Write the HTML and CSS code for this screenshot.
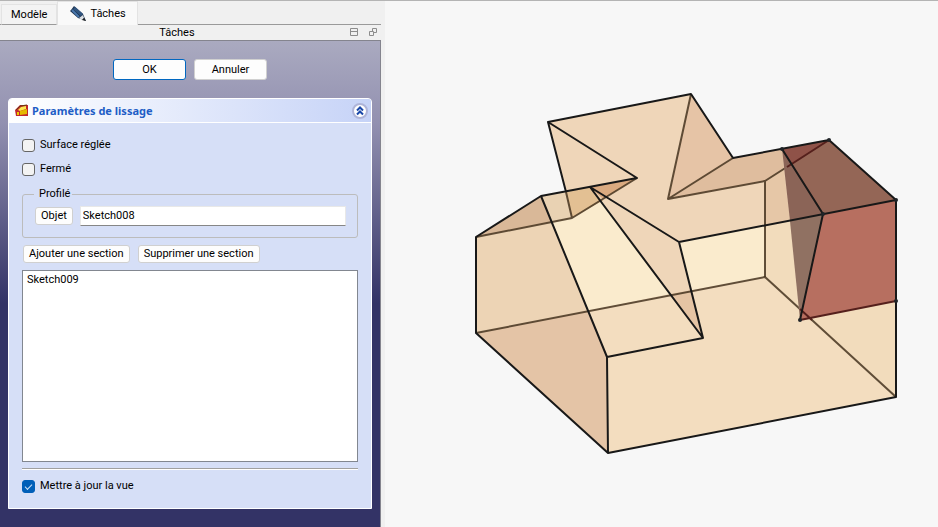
FILE: index.html
```html
<!DOCTYPE html>
<html lang="fr">
  <head>
    <meta charset="utf-8">
    <meta name="viewport" content="width=device-width,initial-scale=1.0">
    <title>Tâches</title>
    <link rel="stylesheet" href="styles.css">
  </head>
  <body>
    <aside class="dock">
      <nav class="tabs">
        <button type="button" class="tab">Modèle</button>
        <button type="button" class="tab active">
          <svg width="16" height="16" viewBox="0 0 16 16">
            <path d="M1 4 L4 0 L13 8 L16 15 L8 12 L0 5 Z" fill="#1c3350"/>
            <path d="M2 4 L9 11" stroke="#4a78ad" stroke-width="2"/>
            <path d="M4 2 L12 9" stroke="#31557f" stroke-width="3"/>
            <path d="M9 12 L13 9 L14 12 L12 14 Z" fill="#dce0e4"/>
            <path d="M14 12 L16 15 L12 14 Z" fill="#222"/>
          </svg>
          Tâches
        </button>
      </nav>
      <header class="titlebar">
        <h1>Tâches</h1>
        <button type="button" class="tool" aria-label="Réduire">
          <svg width="9" height="9" viewBox="0 0 9 9"><path d="M.5 .5h7v7h-7z M0 3.500h8" fill="none" stroke="#8c8c8c"/></svg>
        </button>
        <button type="button" class="tool" aria-label="Détacher">
          <svg width="9" height="9" viewBox="0 0 9 9"><path d="M.5 3.500h4v4h-4z M3.500 3V.5h4v4H5" fill="none" stroke="#8c8c8c"/></svg>
        </button>
      </header>
      <form class="tasks">
        <div class="actions">
          <button type="button" class="btn wide default">OK</button>
          <button type="button" class="btn wide">Annuler</button>
        </div>
        <section class="box">
          <header class="box-head">
            <svg width="14" height="14" viewBox="0 0 14 14">
              <path d="M0 6 L5 1 L13 1 V12 L1 12 Z" fill="#c1272d"/>
              <path d="M3 6 L6 3 L11 2 V5 L5 7 Z" fill="#fce94f"/>
              <path d="M5 7 L12 5 V10 L5 11 Z" fill="#e5b900"/>
              <path d="M2 8 H4 V11 H2 Z" fill="#edc900"/>
              <path d="M1 6 L5 2 L12 1" fill="none" stroke="#6b3a10"/>
            </svg>
            <h2>Paramètres de lissage</h2>
            <button type="button" class="fold" aria-label="Replier">
              <svg width="16" height="16" viewBox="0 0 16 16">
                <circle cx="8" cy="8" r="7" fill="#fff" stroke="#aeb4d8" stroke-width="2"/>
                <path d="M5 7.500 L8 4.500 L11 7.500 M5 11.500 L8 8.500 L11 11.500" fill="none" stroke="#1a48a8" stroke-width="2"/>
              </svg>
            </button>
          </header>
          <div class="box-body">
            <label class="check"><input type="checkbox">Surface réglée</label>
            <label class="check"><input type="checkbox">Fermé</label>
            <fieldset class="profile">
              <legend>Profilé</legend>
              <button type="button" class="btn">Objet</button>
              <input type="text" value="Sketch008" aria-label="Profilé">
            </fieldset>
            <div class="sections">
              <button type="button" class="btn">Ajouter une section</button>
              <button type="button" class="btn">Supprimer une section</button>
            </div>
            <select class="list" size="8" aria-label="Sections">
              <option>Sketch009</option>
            </select>
            <hr>
            <label class="check"><input type="checkbox" checked>Mettre à jour la vue</label>
          </div>
        </section>
      </form>
    </aside>
    <main class="view">
      <svg viewBox="385 1 553 526" role="img" aria-label="Vue 3D">
        <!-- faces -->
        <path fill="#efd6b9" d="M548 122 691 94 733 158 829 140 896 200 896 397 608 453 476 333 476 237 541 196 566 192Z"/>
        <path fill="#edd4b5" d="M476 237 552 222 588 311 476 333Z"/>
        <path fill="#e4c4a6" d="M476 333 588 311 607 357 608 453Z"/>
        <path fill="#d9b898" d="M476 237 541 196 552 222Z"/>
        <path fill="#e9d2b3" d="M541 196 566 192 572 218 552 222Z"/>
        <path fill="#e3c093" d="M566 192 590 187 603 201 572 218Z"/>
        <path fill="#daaa80" d="M590 187 637 178 603 199Z"/>
        <path fill="#faebcd" d="M552 222 572 218 602 201 670 294 588 311Z"/>
        <path fill="#f3ddbf" d="M588 311 670 294 703 338 692 290 765 277 896 301 896 397 608 453 607 357Z"/>
        <path fill="#e5c4a4" d="M670 294 692 290 703 338Z"/>
        <path fill="#faebcd" d="M679 242 765 226 765 277 692 290Z"/>
        <path fill="#e6c4a6" d="M691 94 733 158 668 199Z"/>
        <path fill="#dfbd9e" d="M733 158 782 149 784 170 765 181 668 199Z"/>
        <path fill="#e6c7a7" d="M765 181 784 170 790 221 765 226Z"/>
        <path fill="#f2dcbc" d="M765 226 790 221 800 320 896 301 896 397 765 277Z"/>
        <!-- hidden edges -->
        <g class="hidden-edge">
          <path d="M476 237 572 218 637 178 M566 192 572 218 M691 94 668 199 733 158 M668 199 765 181 829 140 M765 181V277"/>
          <path d="M476 333 765 277 896 397"/>
        </g>
        <!-- loft preview -->
        <path fill="#8b6457" d="M782 149 823 214 790 221Z"/>
        <path fill="#946656" d="M782 149 829 140 896 200 823 214Z"/>
        <path fill="#8f5248" d="M782 149 829 140 791 165Z"/>
        <path fill="#907162" d="M790 221 823 214 800 320Z"/>
        <path fill="#b76f60" d="M823 214 896 200 896 301 800 320Z"/>
        <path class="red-edge" d="M787 167 829 140 M800 309 812 320 M800 320 896 301"/>
        <!-- visible edges -->
        <g class="edge">
          <path d="M566 192 548 122 691 94 733 158 829 140 896 200V397L608 453 476 333V237L541 196 637 178 548 122"/>
          <path d="M541 196 607 357 608 453 M607 357 703 338 590 187 679 242 703 338 M679 242 896 200"/>
          <path d="M782 149 823 214 800 320"/>
        </g>
        <g class="vertex">
          <circle cx="782" cy="149" r="2"/>
          <circle cx="829" cy="140" r="2"/>
          <circle cx="896" cy="200" r="2"/>
          <circle cx="896" cy="301" r="2"/>
          <circle cx="800" cy="320" r="2"/>
          <circle cx="823" cy="214" r="2"/>
        </g>
      </svg>
    </main>
  </body>
</html>
```
FILE: styles.css
```css
* {
    box-sizing: border-box;
}
html, body, h1, h2, form, fieldset, hr {
    margin: 0;
    padding: 0;
}
body {
    display: flex;
    min-height: 100vh;
    border-top: 1px solid #b4b4b4;
    background: #f7f7f7;
    color: #000;
    font: 11px/16px Roboto, "Open Sans", sans-serif;
}
button, input, select {
    font: inherit;
    color: inherit;
}
svg {
    display: block;
}

/* left dock */
.dock {
    display: flex;
    flex-direction: column;
    flex: none;
    width: 385px;
    padding-right: 4px;
    background: #f0f0f0;
}
.tabs {
    display: flex;
    align-items: flex-end;
    height: 24px;
    padding-left: 1px;
    box-shadow: inset 0 -1px #9a9a9a;
}
.tab {
    display: flex;
    align-items: center;
    gap: 4px;
    height: 21px;
    padding: 0 9px;
    border: 1px solid #e3e3e3;
    border-bottom-color: #9a9a9a;
    background: #f3f3f3;
}
.tab.active {
    height: 24px;
    padding: 0 11px 0 12px;
    border-bottom: 0;
    background: #f9f9f9;
}
.titlebar {
    display: flex;
    align-items: center;
    gap: 10px;
    height: 16px;
    padding-right: 3px;
    border-bottom: 1px solid #84848e;
}
.titlebar h1 {
    flex: 1;
    padding-left: 14px;
    font-size: 11px;
    font-weight: normal;
    text-align: center;
}
.tool, .fold {
    padding: 0;
    border: 0;
    background: none;
}
.tasks {
    flex: 1;
    padding: 18px 8px;
    border-right: 1px solid #84848e;
    background: linear-gradient(#aaaac0, #9290b0 17%, #333366 54%);
}
.actions {
    display: flex;
    justify-content: center;
    gap: 8px;
    margin-bottom: 18px;
}
.btn {
    height: 18px;
    padding: 0 5px;
    border: 1px solid #d0d0d0;
    border-radius: 3px;
    background: #fdfdfd;
    line-height: 16px;
}
.btn.wide {
    width: 73px;
    height: 21px;
}
.btn.default {
    border-color: #0067c0;
}

/* task box */
.box {
    border: 1px solid #fff;
    border-radius: 4px 4px 0 0;
    background: #d6dff7;
}
.box-head {
    display: flex;
    align-items: center;
    gap: 3px;
    height: 24px;
    padding: 0 3px 0 6px;
    border-bottom: 1px solid #fff;
    border-radius: 3px 3px 0 0;
    background: linear-gradient(to right, #fff, #c6d3f7);
}
.box-head h2 {
    flex: 1;
    color: #215dc6;
    font: bold 11px/16px "Noto Sans", sans-serif;
}
.box-body {
    padding: 14px 13px 14px;
}
.check {
    display: flex;
    align-items: center;
    gap: 5px;
    height: 16px;
    margin-bottom: 8px;
}
.check input {
    appearance: none;
    width: 13px;
    height: 13px;
    margin: 0;
    border: 1px solid #666;
    border-radius: 3px;
    background: #f3f3f3;
}
.check input:checked {
    border-color: #005fb8;
    background: #005fb8;
}
.check input:checked::after {
    content: "";
    display: block;
    width: 6px;
    height: 3px;
    margin: 3px auto 0;
    border: solid #cfe2f5;
    border-width: 0 0 1px 1px;
    transform: rotate(-45deg);
}
.check:last-child {
    margin-bottom: 0;
}
.profile {
    display: flex;
    align-items: center;
    gap: 7px;
    height: 52px;
    margin-top: 9px;
    padding: 0 11px 8px 12px;
    border: 1px solid #bcbcbc;
    border-radius: 3px;
}
.profile legend {
    margin-left: -1px;
    padding: 0 2px 0 5px;
}
.profile .btn {
    padding: 0 5px;
}
.profile input {
    flex: 1;
    min-width: 0;
    height: 20px;
    padding: 0 2px;
    border: 1px solid #e8e8e8;
    border-bottom-color: #868686;
    background: #fff;
}
.sections {
    display: flex;
    gap: 8px;
    margin: 7px 0 7px 1px;
}
.list {
    display: block;
    width: 100%;
    height: 192px;
    padding: 2px 1px;
    border: 1px solid #828790;
    border-radius: 0;
    background: #fff;
    overflow: auto;
}
.list option {
    min-height: 16px;
    padding: 0 3px;
}
hr {
    height: 2px;
    margin: 6px 0 8px;
    border: 0;
    border-top: 1px solid #a0a0a0;
    border-bottom: 1px solid #fff;
}

/* 3D view */
.view {
    flex: 1;
    min-width: 0;
}
.view svg {
    width: 100%;
    height: auto;
}
.edge, .hidden-edge, .red-edge {
    fill: none;
    stroke: #181818;
    stroke-width: 2;
    stroke-linejoin: round;
}
.hidden-edge {
    stroke: #453420;
    stroke-opacity: .85;
}
.red-edge {
    stroke: #55201c;
}
.vertex {
    fill: #202428;
}
```
